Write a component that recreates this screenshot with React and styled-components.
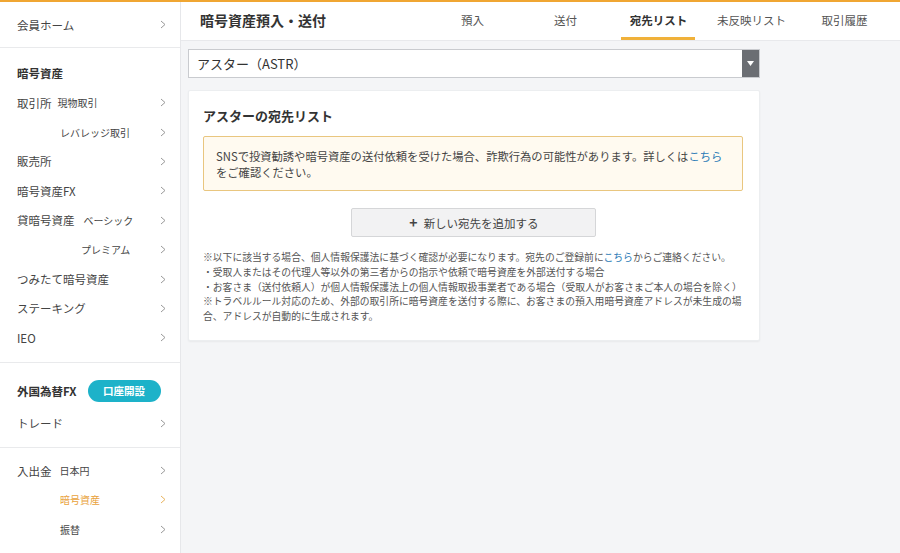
import React from 'react';
import styled, { createGlobalStyle } from 'styled-components';

const GlobalStyle = createGlobalStyle`
  html, body {
    margin: 0;
    padding: 0;
    background: #f4f5f7;
  }
  body {
    font-family: "Noto Sans CJK JP", "Noto Sans", sans-serif;
    color: #333;
  }
  * { box-sizing: border-box; }
`;

const Page = styled.div`
  width: 900px;
  height: 553px;
  border-top: 2px solid #f0a632;
  display: flex;
  overflow: hidden;
`;

const Sidebar = styled.nav`
  width: 181px;
  flex-shrink: 0;
  background: #fff;
  border-right: 1px solid #e6e7ea;
`;

const Section = styled.div`
  padding: ${p => p.$pad || '10px 0 9px'};
  border-bottom: ${p => (p.$last ? 'none' : '1px solid #e9eaec')};
`;

const Row = styled.div`
  height: ${p => p.$h || '29.4px'};
  display: flex;
  align-items: center;
  padding: 0 14px 0 17px;
  font-size: 11.5px;
  color: ${p => (p.$active ? '#e9a23b' : '#444')};
`;

const RowLabel = styled.span`
  flex: 1;
  display: flex;
  align-items: center;
  padding-left: ${p => p.$indent || 0}px;
`;

const Sub = styled.span`
  font-size: 10px;
  margin-left: ${p => p.$gap ?? 8}px;
  color: ${p => (p.$active ? '#e9a23b' : '#444')};
`;

const Heading = styled.div`
  height: ${p => p.$h || '30px'};
  display: flex;
  align-items: center;
  padding-left: 17px;
  font-size: 11.5px;
  font-weight: 700;
  color: #333;
`;

const OpenButton = styled.span`
  margin-left: 11px;
  width: 73px;
  height: 22px;
  border-radius: 11px;
  background: #1db2c9;
  color: #fff;
  font-size: 10.5px;
  display: flex;
  align-items: center;
  justify-content: center;
`;

const Chevron = ({ color = '#999' }) => (
  <svg width="6" height="9" viewBox="0 0 6 9">
    <polyline points="1,1 5,4.5 1,8" fill="none" stroke={color} strokeWidth="1" />
  </svg>
);

const Main = styled.main`
  flex: 1;
  display: flex;
  flex-direction: column;
`;

const Header = styled.header`
  height: 39px;
  background: #fff;
  border-bottom: 1px solid #e8e9ec;
  display: flex;
  align-items: stretch;
  padding-left: 19px;
`;

const PageTitle = styled.h1`
  margin: 0;
  font-size: 14px;
  font-weight: 700;
  color: #333;
  display: flex;
  align-items: center;
  width: 226px;
  padding-bottom: 2px;
`;

const Tabs = styled.div`
  display: flex;
`;

const Tab = styled.div`
  width: 93px;
  display: flex;
  align-items: center;
  justify-content: center;
  position: relative;
  font-size: 11.5px;
  font-weight: ${p => (p.$active ? 700 : 400)};
  color: ${p => (p.$active ? '#333' : '#555')};
  padding-bottom: 2px;

  &::after {
    content: '';
    display: ${p => (p.$active ? 'block' : 'none')};
    position: absolute;
    left: 9px;
    right: 10px;
    bottom: 0;
    height: 3px;
    background: #f0b13a;
  }
`;

const Content = styled.div`
  padding: 8px 0 0 7px;
  width: 580px;
`;

const Select = styled.div`
  height: 29px;
  background: #fff;
  border: 1px solid #c9cbcf;
  display: flex;
  align-items: stretch;
  width: 572px;
`;

const SelectValue = styled.div`
  flex: 1;
  display: flex;
  align-items: center;
  padding-left: 8px;
  font-size: 13px;
  color: #333;
`;

const SelectArrow = styled.div`
  width: 17px;
  background: #6b6e73;
  display: flex;
  justify-content: center;
  padding-top: 11px;
`;

const Card = styled.section`
  margin-top: 12px;
  width: 572px;
  background: #fff;
  border: 1px solid #eceef0;
  border-radius: 2px;
  box-shadow: 0 1px 2px rgba(0, 0, 0, 0.05);
  padding: 15px 16px 16px 14px;
`;

const CardTitle = styled.h2`
  margin: 0 0 10px;
  font-size: 13px;
  line-height: 20px;
  font-weight: 700;
  color: #333;
`;

const Alert = styled.div`
  background: #fffaf0;
  border: 1px solid #e9c67f;
  border-radius: 2px;
  padding: 11px 10px 10px 12px;
  font-size: 11.3px;
  line-height: 16px;
  color: #444;
`;

const Link = styled.a`
  color: #2c7bb6;
  text-decoration: none;
`;

const AddWrap = styled.div`
  display: flex;
  justify-content: center;
  margin-top: 17px;
`;

const AddButton = styled.button`
  width: 245px;
  height: 29px;
  background: #f2f2f3;
  border: 1px solid #d5d6d8;
  border-radius: 2px;
  font-family: inherit;
  font-size: 11.5px;
  color: #444;
  display: flex;
  align-items: center;
  justify-content: center;
  gap: 6px;
  padding: 0 0 0 2px;
`;

const Plus = styled.span`
  font-size: 14px;
  font-weight: 700;
  line-height: 1;
  margin-top: -1px;
`;

const Notes = styled.div`
  margin-top: 13px;
  font-size: 9.8px;
  line-height: 14.8px;
  color: #555;
`;

const navItems = [
  { label: '取引所', sub: '現物取引', gap: 6 },
  { sub: 'レバレッジ取引', indent: 43 },
  { label: '販売所' },
  { label: '暗号資産FX' },
  { label: '貸暗号資産', sub: 'ベーシック', gap: 9 },
  { sub: 'プレミアム', indent: 64 },
  { label: 'つみたて暗号資産' },
  { label: 'ステーキング' },
  { label: 'IEO' },
];

const tabs = ['預入', '送付', '宛先リスト', '未反映リスト', '取引履歴'];

const NavRow = ({ label, sub, gap, indent, active, subActive }) => (
  <Row $active={active}>
    <RowLabel $indent={indent}>
      {label}
      {sub && <Sub $gap={label ? gap : 0} $active={subActive}>{sub}</Sub>}
    </RowLabel>
    <Chevron color={subActive ? '#e9b45e' : '#999'} />
  </Row>
);

export default function App() {
  return (
    <>
      <GlobalStyle />
      <Page>
        <Sidebar>
          <Section $pad="0">
            <Row $h="45px">
              <RowLabel>会員ホーム</RowLabel>
              <Chevron />
            </Row>
          </Section>
          <Section>
            <Heading>暗号資産</Heading>
            {navItems.map((item, i) => (
              <NavRow key={i} {...item} />
            ))}
          </Section>
          <Section>
            <Heading $h="36px">
              外国為替FX
              <OpenButton>口座開設</OpenButton>
            </Heading>
            <NavRow label="トレード" />
          </Section>
          <Section $pad="8px 0 0" $last>
            <NavRow label="入出金" sub="日本円" gap={8} />
            <NavRow sub="暗号資産" indent={43} subActive />
            <NavRow sub="振替" indent={43} />
          </Section>
        </Sidebar>

        <Main>
          <Header>
            <PageTitle>暗号資産預入・送付</PageTitle>
            <Tabs>
              {tabs.map(t => (
                <Tab key={t} $active={t === '宛先リスト'}>{t}</Tab>
              ))}
            </Tabs>
          </Header>

          <Content>
            <Select>
              <SelectValue>アスター（ASTR）</SelectValue>
              <SelectArrow>
                <svg width="7" height="5" viewBox="0 0 7 5">
                  <polygon points="0,0 7,0 3.5,5" fill="#fff" />
                </svg>
              </SelectArrow>
            </Select>

            <Card>
              <CardTitle>アスターの宛先リスト</CardTitle>
              <Alert>
                SNSで投資勧誘や暗号資産の送付依頼を受けた場合、詐欺行為の可能性があります。詳しくは<Link>こちら</Link>をご確認ください。
              </Alert>
              <AddWrap>
                <AddButton>
                  <Plus>+</Plus>
                  新しい宛先を追加する
                </AddButton>
              </AddWrap>
              <Notes>
                ※以下に該当する場合、個人情報保護法に基づく確認が必要になります。宛先のご登録前に<Link>こちら</Link>からご連絡ください。
                <br />
                ・受取人またはその代理人等以外の第三者からの指示や依頼で暗号資産を外部送付する場合
                <br />
                ・お客さま（送付依頼人）が個人情報保護法上の個人情報取扱事業者である場合（受取人がお客さまご本人の場合を除く）
                <br />
                ※トラベルルール対応のため、外部の取引所に暗号資産を送付する際に、お客さまの預入用暗号資産アドレスが未生成の場合、アドレスが自動的に生成されます。
              </Notes>
            </Card>
          </Content>
        </Main>
      </Page>
    </>
  );
}
